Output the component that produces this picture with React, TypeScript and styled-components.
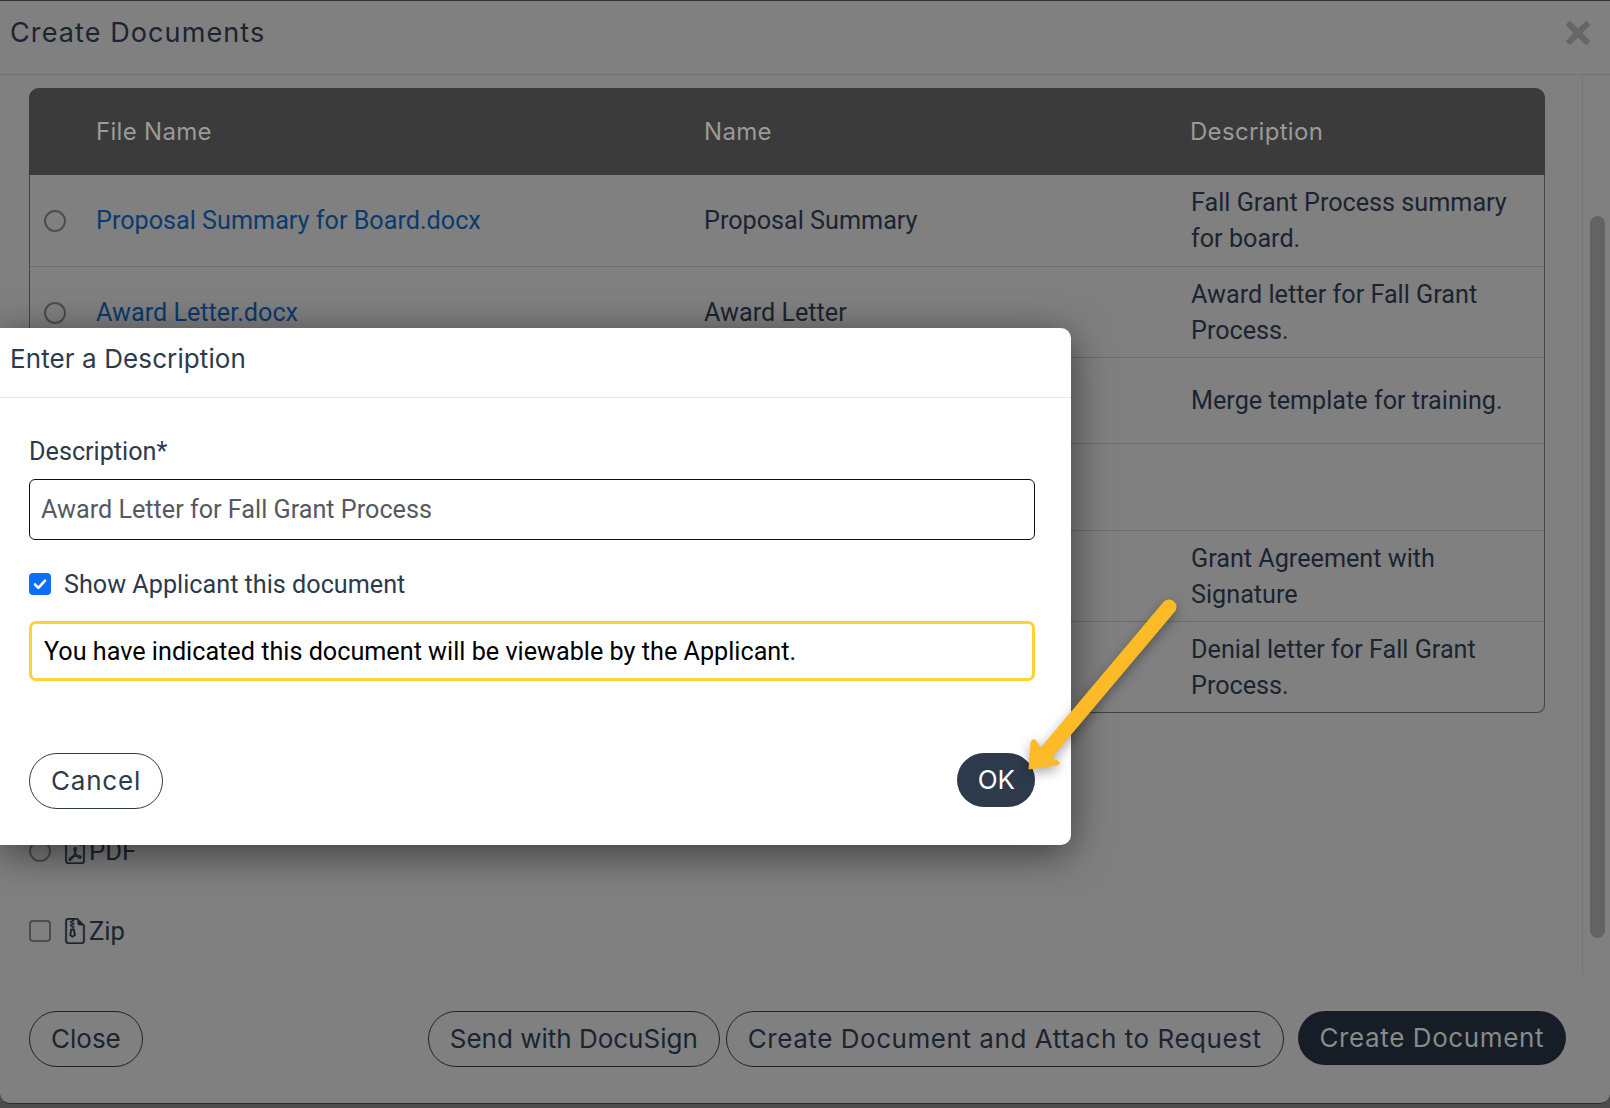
import styled, { createGlobalStyle } from "styled-components";
import { FaTimes } from "react-icons/fa";
import { BsFileEarmarkPdf, BsFileEarmarkZip } from "react-icons/bs";

const heading = `"Inter", "Noto Sans", sans-serif`;
const body = `"Roboto", "Liberation Sans", sans-serif`;

const rows = [
  { file: "Proposal Summary for Board.docx", name: "Proposal Summary", desc: "Fall Grant Process summary for board.", height: 91 },
  { file: "Award Letter.docx", name: "Award Letter", desc: "Award letter for Fall Grant Process.", height: 91 },
  { file: "", name: "", desc: "Merge template for training.", height: 86 },
  { file: "", name: "", desc: "", height: 87 },
  { file: "", name: "", desc: "Grant Agreement with Signature", height: 91 },
  { file: "", name: "", desc: "Denial letter for Fall Grant Process.", height: 91 },
];

export default function App() {
  return (
    <Page>
      <GlobalStyle />
      <Modal>
        <Header>
          <Title>Create Documents</Title>
          <CloseIcon>
            <FaTimes />
          </CloseIcon>
        </Header>
        <Body>
          <Content>
            <Table>
              <HeadRow>
                <span />
                <HeadCell>File Name</HeadCell>
                <HeadCell>Name</HeadCell>
                <HeadCell>Description</HeadCell>
              </HeadRow>
              {rows.map((row, i) => (
                <Row key={i} $height={row.height}>
                  <RadioCell>{row.file && <Radio />}</RadioCell>
                  <FileLink>{row.file}</FileLink>
                  <Cell>{row.name}</Cell>
                  <Cell>{row.desc}</Cell>
                </Row>
              ))}
            </Table>
            <FormatList>
              <Format>
                <Radio />
                <FormatIcon>
                  <BsFileEarmarkPdf />
                </FormatIcon>
                PDF
              </Format>
              <Format>
                <Check />
                <FormatIcon>
                  <BsFileEarmarkZip />
                </FormatIcon>
                Zip
              </Format>
            </FormatList>
          </Content>
          <ScrollTrack>
            <ScrollThumb />
          </ScrollTrack>
        </Body>
        <Footer>
          <OutlineButton $spacing={0}>Close</OutlineButton>
          <FooterRight>
            <OutlineButton $spacing={0}>Send with DocuSign</OutlineButton>
            <OutlineButton $spacing={0.55}>Create Document and Attach to Request</OutlineButton>
            <PrimaryButton>Create Document</PrimaryButton>
          </FooterRight>
        </Footer>
      </Modal>

      <Dialog>
        <DialogHeader>Enter a Description</DialogHeader>
        <DialogBody>
          <Label>Description*</Label>
          <Input readOnly value="Award Letter for Fall Grant Process" />
          <CheckRow>
            <BlueCheck>
              <svg width="16" height="16" viewBox="0 0 16 16" fill="none">
                <path d="M3 8.5l3.4 3.4L13 4.6" stroke="#fff" strokeWidth="2.6" strokeLinecap="round" strokeLinejoin="round" />
              </svg>
            </BlueCheck>
            Show Applicant this document
          </CheckRow>
          <Notice>You have indicated this document will be viewable by the Applicant.</Notice>
        </DialogBody>
        <DialogFooter>
          <CancelButton>Cancel</CancelButton>
          <OkButton>OK</OkButton>
        </DialogFooter>
      </Dialog>

      <Arrow width="170" height="200" viewBox="0 0 170 200">
        <path d="M149 17 L26 163" stroke="#fcba26" strokeWidth="15" strokeLinecap="round" fill="none" />
        <path
          d="M9 179 L11 152 Q13 148 16 151 L20 157 L34 170 L38 171 Q41 174 37 175 Z"
          fill="#fcba26"
          stroke="#fcba26"
          strokeWidth="1"
          strokeLinejoin="round"
        />
      </Arrow>
    </Page>
  );
}

const GlobalStyle = createGlobalStyle`
  html, body {
    margin: 0;
    padding: 0;
    background: #4a4a4a;
  }
  * {
    box-sizing: border-box;
  }
`;

const Page = styled.div`
  position: relative;
  width: 1610px;
  height: 1108px;
  overflow: hidden;
  background: #4c4c4c;
  font-family: ${body};
  color: #1b2430;
`;

const Modal = styled.div`
  height: 1104px;
  display: flex;
  flex-direction: column;
  background: #808080;
  border-top: 1px solid #333;
  border-bottom: 1px solid #2c2c2c;
  border-radius: 0 0 10px 10px;
`;

const Header = styled.div`
  height: 74px;
  flex: none;
  display: flex;
  align-items: center;
  justify-content: space-between;
  padding: 0 15px 10px 10px;
  border-bottom: 1px solid #737373;
`;

const Title = styled.div`
  font-family: ${heading};
  font-size: 27px;
  letter-spacing: 1.1px;
  color: #1b2430;
`;

const CloseIcon = styled.div`
  display: flex;
  font-size: 34px;
  color: #666;
`;

const Body = styled.div`
  height: 900px;
  flex: none;
  display: flex;
`;

const Content = styled.div`
  flex: 1;
  padding: 13px 0 0 29px;
`;

const Table = styled.div`
  width: 1516px;
  border: 1px solid #444;
  border-top: none;
  border-radius: 10px 10px 8px 8px;
`;

const HeadRow = styled.div`
  display: grid;
  grid-template-columns: 67px 608px 486px 1fr;
  align-items: center;
  height: 87px;
  margin: 0 -1px;
  background: #3b3b3b;
  border-radius: 10px 10px 0 0;
`;

const HeadCell = styled.div`
  font-family: ${heading};
  font-size: 24px;
  letter-spacing: 0.3px;
  color: #9a9a9a;
`;

const Row = styled.div<{ $height: number }>`
  display: grid;
  grid-template-columns: 66px 608px 487px 1fr;
  align-items: center;
  height: ${(p) => p.$height}px;
  padding-top: 1px;
  font-size: 25.2px;
  line-height: 36px;
  & + & {
    border-top: 1px solid #6b6b6b;
  }
`;

const RadioCell = styled.div`
  display: flex;
  padding-left: 14px;
`;

const Radio = styled.span`
  display: block;
  flex: none;
  width: 22px;
  height: 22px;
  border: 2px solid #4d4d4d;
  border-radius: 50%;
`;

const Check = styled.span`
  display: block;
  flex: none;
  width: 22px;
  height: 22px;
  border: 2px solid #4d4d4d;
  border-radius: 4px;
`;

const FileLink = styled.a`
  color: #0a3a6e;
`;

const Cell = styled.div`
  padding-right: 20px;
  color: #1b2430;
`;

const FormatList = styled.div`
  display: flex;
  flex-direction: column;
  gap: 55px;
  margin-top: 125px;
`;

const Format = styled.div`
  display: flex;
  align-items: center;
  gap: 13px;
  height: 25px;
  font-size: 25.6px;
  color: #1b2430;
`;

const FormatIcon = styled.span`
  display: flex;
  font-size: 26px;
  margin-right: -12px;
  margin-left: -2px;
  svg {
    stroke: currentColor;
    stroke-width: 0.2;
  }
`;

const ScrollTrack = styled.div`
  width: 28px;
  flex: none;
  padding: 141px 5px 0 7px;
  border-left: 1px solid #757575;
`;

const ScrollThumb = styled.div`
  height: 722px;
  background: #636363;
  border-radius: 8px;
`;

const Footer = styled.div`
  display: flex;
  justify-content: space-between;
  align-items: flex-start;
  padding: 36px 44px 0 29px;
`;

const FooterRight = styled.div`
  display: flex;
  align-items: flex-start;
  gap: 6px;
`;

const OutlineButton = styled.button<{ $spacing?: number }>`
  height: 56px;
  padding: 0 21px 2px;
  border: 1px solid #1b2430;
  border-radius: 28px;
  background: transparent;
  font-family: ${heading};
  font-size: 26px;
  letter-spacing: ${(p) => p.$spacing ?? 0.5}px;
  color: #1b2430;
`;

const PrimaryButton = styled.button`
  height: 54px;
  margin-left: 8px;
  padding: 0 22px 2px;
  border: none;
  border-radius: 27px;
  background: #161d26;
  font-family: ${heading};
  font-size: 26px;
  letter-spacing: 0.6px;
  color: #8a8a8a;
`;

const Dialog = styled.div`
  position: absolute;
  left: 0;
  top: 328px;
  width: 1071px;
  height: 517px;
  display: flex;
  flex-direction: column;
  background: #fff;
  border-radius: 0 10px 10px 0;
  box-shadow: 0 8px 40px rgba(0, 0, 0, 0.55);
`;

const DialogHeader = styled.div`
  height: 70px;
  flex: none;
  padding: 15px 10px 0;
  border-bottom: 1px solid #e5e5e5;
  font-family: ${heading};
  font-size: 26px;
  letter-spacing: 0.1px;
  color: #2d3a4b;
`;

const DialogBody = styled.div`
  flex: 1;
  padding: 38px 36px 0 29px;
`;

const Label = styled.div`
  font-size: 25.2px;
  line-height: 32px;
  color: #2d3a4b;
`;

const Input = styled.input`
  display: block;
  width: 100%;
  height: 61px;
  margin-top: 11px;
  padding: 0 11px;
  border: 1px solid #111;
  border-radius: 6px;
  outline: none;
  font-family: ${body};
  font-size: 25.2px;
  color: #55595f;
`;

const CheckRow = styled.div`
  display: flex;
  align-items: center;
  gap: 13px;
  height: 32px;
  margin-top: 28px;
  font-size: 25.2px;
  color: #2d3a4b;
`;

const BlueCheck = styled.span`
  display: flex;
  align-items: center;
  justify-content: center;
  flex: none;
  width: 22px;
  height: 22px;
  background: #0b6efd;
  border-radius: 4px;
`;

const Notice = styled.div`
  display: flex;
  align-items: center;
  height: 60px;
  margin-top: 21px;
  padding: 0 12px;
  border: 3px solid #fdd334;
  border-radius: 7px;
  font-size: 25.2px;
  color: #000;
`;

const DialogFooter = styled.div`
  display: flex;
  justify-content: space-between;
  align-items: flex-start;
  padding: 0 36px 36px 29px;
`;

const CancelButton = styled.button`
  height: 56px;
  padding: 0 21px 2px;
  background: #fff;
  border: 1px solid #2d3a4b;
  border-radius: 28px;
  font-family: ${heading};
  font-size: 26px;
  letter-spacing: 0.8px;
  color: #2d3a4b;
`;

const OkButton = styled.button`
  height: 54px;
  padding: 0 20px 2px 21px;
  background: #2d3a4b;
  border: none;
  border-radius: 27px;
  font-family: ${heading};
  font-size: 26px;
  color: #fff;
`;

const Arrow = styled.svg`
  position: absolute;
  left: 1020px;
  top: 590px;
  filter: drop-shadow(0 4px 6px rgba(0, 0, 0, 0.35));
`;
